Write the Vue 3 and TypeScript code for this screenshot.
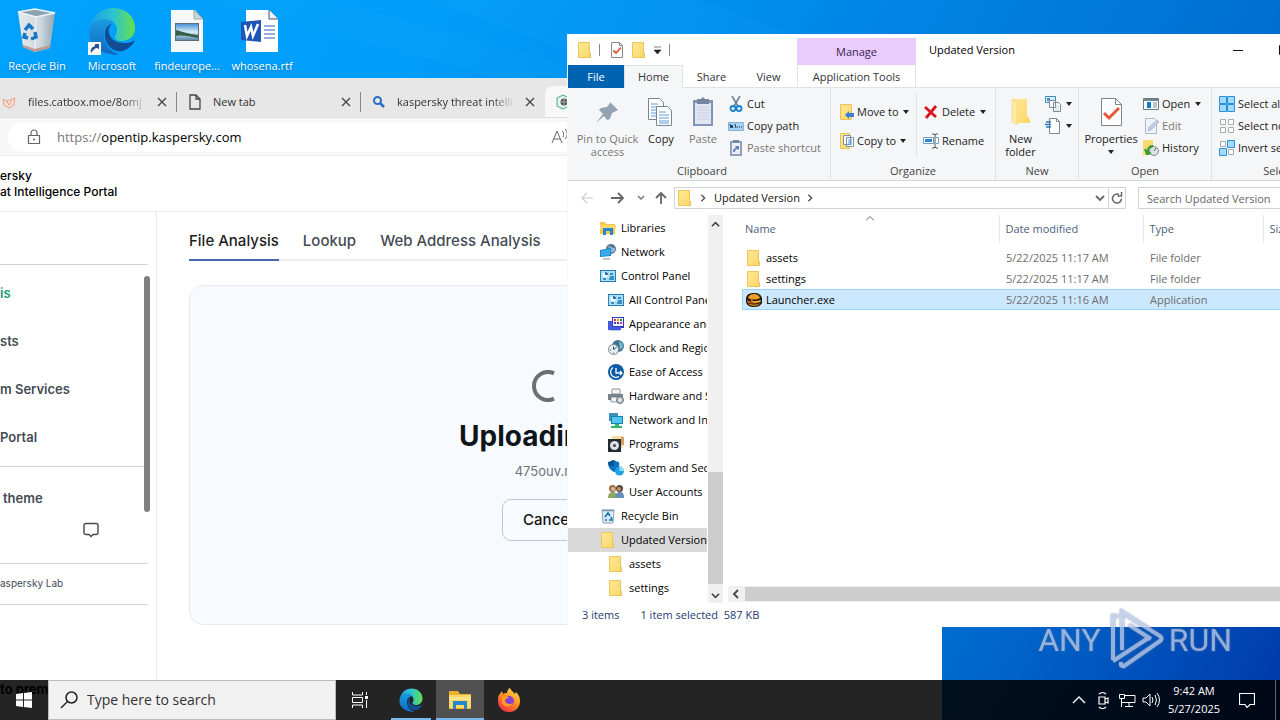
<script setup lang="ts">
interface TreeItem { label: string; icon: string; child?: boolean; active?: boolean }
interface FileRow { name: string; date: string; type: string; icon: string; selected?: boolean }
interface Shortcut { label: string; icon: string }

const shortcuts: Shortcut[] = [
  { label: 'Recycle Bin', icon: 'bin' },
  { label: 'Microsoft Edge', icon: 'edge-link' },
  { label: 'findeurope...', icon: 'image-file' },
  { label: 'whosena.rtf', icon: 'word-file' },
]

const tree: TreeItem[] = [
  { label: 'Libraries', icon: 'libraries' },
  { label: 'Network', icon: 'network' },
  { label: 'Control Panel', icon: 'panel' },
  { label: 'All Control Panel Items', icon: 'panel', child: true },
  { label: 'Appearance and Personalization', icon: 'appearance', child: true },
  { label: 'Clock and Region', icon: 'clock', child: true },
  { label: 'Ease of Access', icon: 'ease', child: true },
  { label: 'Hardware and Sound', icon: 'hardware', child: true },
  { label: 'Network and Internet', icon: 'internet', child: true },
  { label: 'Programs', icon: 'programs', child: true },
  { label: 'System and Security', icon: 'security', child: true },
  { label: 'User Accounts', icon: 'users', child: true },
  { label: 'Recycle Bin', icon: 'bin-small' },
  { label: 'Updated Version', icon: 'folder', active: true },
  { label: 'assets', icon: 'folder', child: true },
  { label: 'settings', icon: 'folder', child: true },
]

const files: FileRow[] = [
  { name: 'assets', date: '5/22/2025 11:17 AM', type: 'File folder', icon: 'folder' },
  { name: 'settings', date: '5/22/2025 11:17 AM', type: 'File folder', icon: 'folder' },
  { name: 'Launcher.exe', date: '5/22/2025 11:16 AM', type: 'Application', icon: 'burger', selected: true },
]
</script>

<template>
  <div class="desktop">
    <svg class="defs" aria-hidden="true">
      <defs>
        <linearGradient id="g-edge-a" x1="0" y1="0" x2="1" y2="0"><stop offset="0" stop-color="#1ba0e2" /><stop offset=".5" stop-color="#2bc3d2" /><stop offset="1" stop-color="#66e04c" /></linearGradient>
        <linearGradient id="g-edge-b" x1="0" y1="0" x2="0" y2="1"><stop offset="0" stop-color="#1b9de2" /><stop offset="1" stop-color="#1266c0" /></linearGradient>
        <linearGradient id="g-folder" x1="0" y1="0" x2="1" y2="1"><stop offset="0" stop-color="#ffe896" /><stop offset="1" stop-color="#fbd768" /></linearGradient>
        <linearGradient id="g-bin" x1="0" y1="0" x2="1" y2="0"><stop offset="0" stop-color="#e4eaee" /><stop offset=".6" stop-color="#cfd9df" /><stop offset="1" stop-color="#8fa6b5" /></linearGradient>
        <linearGradient id="g-fox" x1=".8" y1="0" x2=".2" y2="1"><stop offset="0" stop-color="#ffe14a" /><stop offset=".5" stop-color="#ff8a1f" /><stop offset="1" stop-color="#f2264e" /></linearGradient>
        <linearGradient id="g-photo" x1="0" y1="0" x2="0" y2="1"><stop offset="0" stop-color="#4b93d6" /><stop offset=".5" stop-color="#d8eef8" /><stop offset="1" stop-color="#5c8aa8" /></linearGradient>
      </defs>
      <symbol id="edge" viewBox="0 0 48 48">
        <path d="M2 21C4 9 13 1 25 1c13 0 22 9 22 20 0 8-6 13-13 13-5 0-7-2-7-4 0-2 2-3 2-7 0-6-5-11-13-11C9 12 4 15 2 21z" fill="url(#g-edge-a)" />
        <path d="M1 24c1-8 7-12 15-12 5 0 9 2 11 5-6-1-11 3-11 11 0 9 6 17 15 19-3 1-6 1-8 0C10 46 0 37 1 24z" fill="url(#g-edge-b)" />
        <path d="M17 26c-1 11 7 20 18 18 5-2 9-5 11-9 1-1 0-2-1-1-3 2-6 2-9 2-8 0-14-4-15-10-1-4 1-7 3-9-4 1-7 4-7 9z" fill="#104d92" />
      </symbol>
      <symbol id="edge-link" viewBox="0 0 48 48">
        <use href="#edge" width="48" height="48" />
        <rect x="0" y="35" width="13" height="13" fill="#f6f6f6" />
        <path d="M3 46c-1-4 1-6 4-7v-2h4v5l-2-1c-2 0-4 2-6 5z" fill="#23509a" />
      </symbol>
      <symbol id="bin" viewBox="0 0 48 48">
        <path d="M5 5l17-3 20 4-5 35-15 4-12-5z" fill="url(#g-bin)" />
        <path d="M5 5l17-3 20 4-19 4z" fill="#8ba3b3" stroke="#eef3f5" stroke-width="1.500" />
        <path d="M23 10l-1 35" stroke="#f3f6f7" stroke-width="1" fill="none" />
        <g fill="none" stroke="#1678c8" stroke-width="3.500"><path d="M12 23l4-5 4 4M22 25l1 5-5 2M15 31l-4-1 1-4" /></g>
        <path d="M10 38l12 4 15-4v3l-15 4-12-5z" fill="#c09a8e" />
      </symbol>
      <symbol id="image-file" viewBox="0 0 48 48">
        <path d="M8 3h24l8 9v33H8z" fill="#f7f8f8" /><path d="M31 3v9h9z" fill="#cdd6da" stroke="#9aa" />
        <rect x="12" y="16" width="24" height="18" fill="#5b6d78" /><rect x="13" y="17" width="22" height="16" fill="url(#g-photo)" />
        <path d="M13 23c5 1 9 3 15 4l7 1v3c-9-2-16-3-22-2z" fill="#355f47" />
      </symbol>
      <symbol id="word-file" viewBox="0 0 48 48">
        <path d="M8 3h23l9 9v33H8z" fill="#fff" /><path d="M31 3v9h9" fill="#edf1f8" stroke="#456" />
        <path d="M26 19h11M26 23h11M26 27h11M26 31h11" stroke="#2a5cb6" /><path d="M3 15l20-2v22L3 33z" fill="#1f56b5" />
        <path d="M7 18l2 11 4-9 2 9 5-12" fill="none" stroke="#fff" stroke-width="2.500" />
      </symbol>
      <symbol id="folder" viewBox="0 0 16 16"><path d="M1.500.5h11v11h1v4h-12z" fill="url(#g-folder)" stroke="#edc65a" stroke-width="1" /><path d="M11.500 15.500c1-1 0-3 2-4v4z" fill="#ffe9a0" stroke="#e5ba4b" stroke-width=".7" /></symbol>
      <symbol id="folder-big" viewBox="0 0 32 32"><path d="M7 3h15v17l3 3v4H11z" fill="url(#g-folder)" /><path d="M7 3l5 4v22l-5-3z" fill="#ffeaa6" stroke="#f4d075" stroke-width=".6" /></symbol>
      <symbol id="burger" viewBox="0 0 16 16">
        <path d="M0 7c0-4 3-6 8-6s7 2 8 5v5c-2 3-4 4-8 4s-7-1-8-5z" fill="#24170b" /><path d="M2 6c1-3 3-4 6-4s5 1 6 4c-3 2-9 2-12 0z" fill="#f09a24" /><path d="M1 8c3 2 9 2 13 0v2c-3 2-10 2-13 0z" fill="#d65c17" /><path d="M2 11c4 2 9 2 12 0-1 4-11 4-12 0z" fill="#d78a2a" /><path d="M5 8l3 2 7-1M5 4h1M8 3h1M10 5h1" stroke="#ffdf6b" fill="none" />
      </symbol>
      <symbol id="libraries" viewBox="0 0 16 16"><path d="M0 2h5l1 2h9v10H0z" fill="#f8c549" /><path d="M0 5h16v4H0z" fill="#ffd96b" /><path d="M3 15V8h10v7h-3v-4H6v4z" fill="#2587d1" /></symbol>
      <symbol id="network" viewBox="0 0 16 16"><circle cx="11" cy="5" r="5" fill="#56748c" /><path d="M8 2c3 0 4 2 7 2v3l-4 2z" fill="#8cb6d1" /><path d="M0 6l11-2v8L0 13z" fill="#1889d4" /><path d="M1 7l9-2v6l-9 1z" fill="#38aceb" /><path d="M3 15h7" stroke="#88a" /></symbol>
      <symbol id="panel" viewBox="0 0 16 16"><rect y="2" width="16" height="12" fill="#2680bd" /><rect x="1" y="3" width="14" height="10" fill="#a8def7" /><circle cx="5" cy="7" r="2.500" fill="#fff" /><path d="M5 7V4a3 3 0 0 1 3 3z" fill="#1e69aa" /><path d="M10 6h3M10 9h4M3 11h3M9 11h5" stroke="#1872ae" stroke-width="1.400" /></symbol>
      <symbol id="appearance" viewBox="0 0 16 16"><path d="M4 1h12v11H4z" fill="#303db7" /><path d="M5 2h10v8H5z" fill="#f6f1ff" /><path d="M6 3h2v2H6z" fill="#d34" /><path d="M9 3h2v2H9z" fill="#f90" /><path d="M12 3h2v2h-2z" fill="#292" /><path d="M6 6h2v2H6zM9 6h2v2H9z" fill="#44a" /><path d="M12 6h2v2h-2z" fill="#c3a" /><path d="M0 5h4v6h9v3H0z" fill="#4557e6" /><path d="M2 14h10v1H2z" fill="#bcd" /></symbol>
      <symbol id="clock" viewBox="0 0 16 16"><circle cx="10" cy="6" r="6" fill="#41718c" /><path d="M11 1c3 1 4 3 4 6l-3 3z" fill="#79b6cf" /><circle cx="5.500" cy="9.500" r="5" fill="#e8eff3" stroke="#788994" /><path d="M5.500 6.500v3l3-2M2 10h1M5 13h1" fill="none" stroke="#356" /></symbol>
      <symbol id="ease" viewBox="0 0 16 16"><circle cx="8" cy="8" r="8" fill="#0c5ba4" /><path d="M8 4v5h6M12 7l2 2-2 2M11 12.500a5 5 0 1 1-6-9" fill="none" stroke="#fff" stroke-width="1.300" /></symbol>
      <symbol id="hardware" viewBox="0 0 16 16"><path d="M4 1h8v5H4z" fill="#f5f8fa" stroke="#849099" /><path d="M0 6h15v6H0z" fill="#78858e" /><path d="M3 9h7v5H3z" fill="#f1f4f6" stroke="#68757e" stroke-width=".7" /><circle cx="12" cy="12" r="3.500" fill="#b5bdc3" stroke="#68757e" /><circle cx="12" cy="12" r="1.500" fill="#f8f8f8" /></symbol>
      <symbol id="internet" viewBox="0 0 16 16"><path d="M1 1h9v8H1z" fill="#3d8fbd" /><path d="M3 4h12v8H3z" fill="#1582b5" /><path d="M4 5h10v6H4z" fill="#54c5ef" /><path d="M7 12h4v2h3v2H3v-2h4z" fill="#31b76b" /></symbol>
      <symbol id="programs" viewBox="0 0 16 16"><path d="M4 0h11v12H4z" fill="#f5dfa1" /><path d="M13 1h3v8h-3z" fill="#d9a06a" /><path d="M0 3h13v13H0z" fill="#252a2e" /><circle cx="6.500" cy="9.500" r="4.500" fill="#d8e2e7" /><circle cx="6.500" cy="9.500" r="1.500" fill="#354551" /></symbol>
      <symbol id="security" viewBox="0 0 16 16"><path d="M0 2c3 0 4-2 6-2 2 1 3 2 5 2 1 6-1 9-5 10C2 10 0 7 0 2z" fill="#0675c1" /><path d="M0 2c3 0 4-2 6-2v6H1z" fill="#085195" /><circle cx="11.500" cy="11" r="4.500" fill="#21a0df" /><path d="M11.500 11V6.500A4.500 4.500 0 0 1 16 11z" fill="#8ddcff" /></symbol>
      <symbol id="users" viewBox="0 0 16 16"><circle cx="4.500" cy="4.500" r="3.500" fill="#9b6b48" /><circle cx="5" cy="5" r="2" fill="#e6b78f" /><circle cx="11.500" cy="4.500" r="3.500" fill="#56463c" /><circle cx="11" cy="5" r="2" fill="#c18f6b" /><path d="M0 14c0-4 2-6 5-6s4 2 4 6z" fill="#8ca761" /><path d="M7 14c0-4 2-6 5-6s4 2 4 6z" fill="#6390b3" /></symbol>
      <symbol id="bin-small" viewBox="0 0 16 16"><path d="M2 2h12l-1 13H3z" fill="#dbeaf3" stroke="#8ba7ba" /><path d="M2 2.500h12" stroke="#7897ac" stroke-width="1.500" /><path d="M5 9l3-4 2 3M11 9l1 3H9M7 12H5" fill="none" stroke="#1476bb" stroke-width="1.600" /></symbol>
      <symbol id="doc-check" viewBox="0 0 16 16"><path d="M2.500.5h8l3 3v12h-11z" fill="#fff" stroke="#8a8a8a" /><path d="M10.500.5v3h3" fill="none" stroke="#8a8a8a" /><path d="M4.500 8.500l2.500 2.500 5-5.500" fill="none" stroke="#e0532f" stroke-width="1.800" /></symbol>
      <symbol id="doc-check-big" viewBox="0 0 32 32"><path d="M6.500 2.500h14l6 6v21h-20z" fill="#fff" stroke="#7d858c" /><path d="M20.500 2.500v6h6" fill="none" stroke="#7d858c" /><path d="M9 17l5 5 10-10" fill="none" stroke="#e8573a" stroke-width="3" /></symbol>
      <symbol id="pin" viewBox="0 0 32 32"><path d="M18 6l8 8-2 1-4 2-2 6-3 1-3-4-8 7 7-9-4-4 2-2 6-1 3-4z" fill="#93a3b5" /></symbol>
      <symbol id="copy" viewBox="0 0 32 32"><g fill="#fff" stroke="#778491"><path d="M3.500 2.500h11l4 4v17h-15z" /><path d="M11.500 10.500h11l4 4v15h-15z" /></g><path d="M6 8h7M6 11h5M6 14h5M6 17h5M6 20h5M14 16h7M14 19h10M14 22h10M14 25h10M14 27h10" stroke="#5d98d9" /></symbol>
      <symbol id="paste" viewBox="0 0 32 32"><path d="M6 4h20v26H6z" fill="#8294b5" /><path d="M8 7h16v21H8z" fill="#dfe6f2" /><path d="M10 3h4l2-2 2 2h4v5H10z" fill="#74849e" /><path d="M10 11h12M10 14h12M10 17h12M10 20h12M10 23h12" stroke="#c5d0e1" /></symbol>
      <symbol id="cut" viewBox="0 0 16 16"><path d="M4 0l6 10M12 0L6 10" stroke="#728292" stroke-width="1.600" /><g fill="none" stroke="#1683cf" stroke-width="1.800"><circle cx="5" cy="12.500" r="2.500" /><circle cx="11" cy="12.500" r="2.500" /></g></symbol>
      <symbol id="path" viewBox="0 0 16 16"><path d="M.5 4.500h15v8H.5z" fill="#a7d3f3" stroke="#80b3d9" /><path d="M2 6l1 4 1-3 1 3M7 6l1 4M9 9h1M11 9h1M13 9h1" fill="none" stroke="#17374f" /></symbol>
      <symbol id="shortcut" viewBox="0 0 16 16"><path d="M2 1h12v15H2z" fill="#91a1bc" /><path d="M4 3h8v11H4z" fill="#edf1f7" /><path d="M5 0h6v3H5z" fill="#77869f" /><path d="M5 12c0-3 1-4 3-4L7 6h4v4L9 9c-2 1-2 2-2 3z" fill="#6681ae" /></symbol>
      <symbol id="move" viewBox="0 0 16 16"><path d="M1.500.5h11v15h-11z" fill="url(#g-folder)" stroke="#e9c45a" /><path d="M6 11l4-4v2h5v4h-5v2z" fill="#3f7fd5" /></symbol>
      <symbol id="copy-to" viewBox="0 0 16 16"><path d="M1.500.5h9v15h-9z" fill="url(#g-folder)" stroke="#e9c45a" /><path d="M4.500 2.500h7v9h-7zM7.500 4.500h7v9h-7z" fill="#fff" stroke="#7d91aa" /><path d="M9 7h4M9 9h4M9 11h4" stroke="#5b9add" /></symbol>
      <symbol id="delete" viewBox="0 0 16 16"><path d="M2 3l11 10M13 2L3 14" stroke="#d9151e" stroke-width="2.800" /></symbol>
      <symbol id="rename" viewBox="0 0 16 16"><path d="M.5 4.500h10v6H.5zM13 4.500h2.500v6H13" fill="#fff" stroke="#6c9fca" /><path d="M2 6h7v3H2z" fill="#2d86ce" /><path d="M9 1h2l1 1 1-1h2M9 15h2l1-1 1 1h2M12 2v12" fill="none" stroke="#565656" /></symbol>
      <symbol id="new-item" viewBox="0 0 16 16"><path d="M.5.5h10v6H.5z" fill="#d8eefe" stroke="#4289b6" /><path d="M2 2h3v3H2z" fill="#4a96c5" /><path d="M4.500 4.500h6v7h-6zM8.500 6.500h5l2 2v7h-7z" fill="#fff" stroke="#778a98" /><path d="M10 10h4M10 12h4M10 14h4" stroke="#9eb4c2" stroke-width=".6" /></symbol>
      <symbol id="easy" viewBox="0 0 16 16"><path d="M4.500.5h7l3 3v12h-10z" fill="#fff" stroke="#778a98" /><path d="M11.500.5v3h3" fill="none" stroke="#778a98" /><path d="M1 4h5M0 6.500h6M1 9h5" stroke="#2e78b8" stroke-width="1.300" /></symbol>
      <symbol id="open" viewBox="0 0 16 16"><path d="M.5 2.500h15v11H.5z" fill="#fff" stroke="#687986" /><path d="M1 3h14v2H1z" fill="#728593" /><path d="M4 6h4v6H4z" fill="#127bc7" /><path d="M10 7h4M10 9h4M10 11h4" stroke="#7d8992" /></symbol>
      <symbol id="edit" viewBox="0 0 16 16"><path d="M2.500.5h9l2 2v13h-11z" fill="#f0f4fc" stroke="#aab8cf" /><path d="M5 13l1-4 8-7 2 2-8 8z" fill="#c3cfe1" stroke="#9aaac3" stroke-width=".6" /></symbol>
      <symbol id="history" viewBox="0 0 16 16"><path d="M0 0h10v15H0z" fill="#fbd96a" /><circle cx="11" cy="11" r="4.500" fill="#dce4e6" stroke="#7f8c91" /><path d="M11 11l2-3" fill="none" stroke="#667" /><path d="M5 13c-1-4 1-7 5-7M2 9l2 5 4-1" fill="none" stroke="#279c36" stroke-width="2" /></symbol>
      <symbol id="sel-all" viewBox="0 0 16 16"><path d="M.5.5h7v7h-7zM8.500.5h7v7h-7zM.5 8.500h7v7h-7zM8.500 8.500h7v7h-7z" fill="#a3d8ff" stroke="#2990db" /></symbol>
      <symbol id="sel-none" viewBox="0 0 16 16"><path d="M1.500 1.500h5v5h-5zM9.500 1.500h5v5h-5zM1.500 9.500h5v5h-5zM9.500 9.500h5v5h-5z" fill="#fff" stroke="#aaa" /></symbol>
      <symbol id="sel-inv" viewBox="0 0 16 16"><path d="M1.500 1.500h5v5h-5zM9.500 9.500h5v5h-5z" fill="#fff" stroke="#aaa" /><path d="M8.500.5h7v7h-7zM.5 8.500h7v7h-7z" fill="#a3d8ff" stroke="#2990db" /></symbol>
      <symbol id="close" viewBox="0 0 10 10"><path d="M1 1l8 8M9 1L1 9" stroke="#444" stroke-width="1.300" /></symbol>
      <symbol id="lens" viewBox="0 0 20 20"><circle cx="12.500" cy="7.500" r="5.500" fill="none" stroke="currentColor" stroke-width="1.500" /><path d="M8.500 11.500L2 18" stroke="currentColor" stroke-width="1.500" /></symbol>
      <symbol id="chev" viewBox="0 0 10 10"><path d="M1 3l4 4 4-4" fill="none" stroke="currentColor" stroke-width="1.800" /></symbol>
    </svg>

    <svg class="rays" viewBox="0 0 1280 720" preserveAspectRatio="none" aria-hidden="true">
      <path d="M200 0L700 130V100L330 0z" fill="#2fb4ff" opacity=".07" /><path d="M430 0L860 160V60L700 0z" fill="#2fb4ff" opacity=".09" />
    </svg>

    <ul class="shortcuts">
      <li v-for="s in shortcuts" :key="s.label"><svg><use :href="'#' + s.icon" /></svg><span>{{ s.label }}</span></li>
    </ul>

    <section class="browser">
      <div class="strip">
        <div class="tab first"><svg class="fav"><path d="M2 5l4 2 8-3-1 7-5 3-5-3zM5 6l3 5 3-5" fill="#f8dfcf" stroke="#e7a184" /></svg><span class="tt fade">files.catbox.moe/8omj</span><button aria-label="Close tab"><svg><use href="#close" /></svg></button></div>
        <div class="tab"><svg class="fav"><path d="M3 1h6l4 4v10H3zM9 1v4h4" fill="none" stroke="#444" stroke-width="1.300" /></svg><span class="tt">New tab</span><button aria-label="Close tab"><svg><use href="#close" /></svg></button></div>
        <div class="tab"><svg class="fav"><circle cx="6.500" cy="6.500" r="3.500" fill="none" stroke="#2b6cc4" stroke-width="2" /><path d="M9 9l4 4" stroke="#2b6cc4" stroke-width="2.500" /></svg><span class="tt fade">kaspersky threat intellig</span><button aria-label="Close tab"><svg><use href="#close" /></svg></button></div>
        <div class="tab current"><svg class="fav"><path d="M8 1l6 3v8l-6 3-6-3V4z" fill="#e3f3ee" stroke="#3ba98a" /><circle cx="9" cy="8" r="3.500" fill="#555" /><path d="M5 8h8M9 4v8" stroke="#aaa" /></svg></div>
      </div>
      <div class="toolbar">
        <div class="omnibox">
          <svg class="lock"><path d="M2.500 6.500h11v8h-11zM5 6V4a3 3 0 0 1 6 0v2" fill="none" stroke="#666" stroke-width="1.200" /><circle cx="8" cy="10.500" r="1" fill="#555" /></svg>
          <label for="url">https://</label><input id="url" type="text" value="opentip.kaspersky.com" />
          <svg class="read"><path d="M1 15L6 3l5 12M3 11h6M11 3c2 1 2 4 1 6M14 1c3 3 3 7 0 10" fill="none" stroke="#666" /></svg>
        </div>
      </div>
      <div class="page">
        <header class="brand"><span>ersky</span><span>at Intelligence Portal</span></header>
        <aside>
          <nav class="side-nav">
            <a href="#" class="on">is</a><a href="#">sts</a><a href="#">m Services</a><a href="#">Portal</a>
            <i class="side-scroll"></i>
          </nav>
          <div class="theme"><a href="#">theme</a><svg><path d="M3 1.500h10q2 0 2 2v7q0 2-2 2h-3l-2 2-2-2H3q-2 0-2-2v-7q0-2 2-2z" fill="none" stroke="#434a52" stroke-width="1.400" /></svg></div>
          <div class="legal">aspersky Lab</div>
          <div class="premium">to premium</div>
        </aside>
        <main>
          <nav class="ktabs"><a href="#" class="on">File Analysis</a><a href="#">Lookup</a><a href="#">Web Address Analysis</a></nav>
          <div class="card">
            <svg class="spin" viewBox="0 0 32 32"><path d="M22 3.350A14 14 0 1 0 22 28.650" fill="none" stroke="#6d6f72" stroke-width="4" /></svg>
            <h1>Uploading...</h1><p>475ouv.rar</p><button>Cancel</button>
          </div>
        </main>
      </div>
    </section>

    <section class="explorer">
      <div class="titlebar">
        <div class="qat"><svg class="ic"><use href="#folder" /></svg><i></i><svg class="ic"><use href="#doc-check" /></svg><svg class="ic"><use href="#folder" /></svg><svg class="dd"><path d="M0 1h7M0 4h7L3.500 8z" fill="#222" stroke="#222" stroke-width=".6" /></svg><i></i></div>
        <div class="manage">Manage</div>
        <div class="caption">Updated Version</div>
        <div class="controls"><button aria-label="Minimize"><svg><path d="M0 5.500h10" stroke="#111" /></svg></button><button aria-label="Maximize"><svg><path d="M.5.500h9v9h-9z" fill="none" stroke="#111" /></svg></button><button aria-label="Close"><svg><use href="#close" /></svg></button></div>
      </div>
      <div class="rtabs"><button class="file">File</button><button class="home">Home</button><button>Share</button><button>View</button><button class="app">Application Tools</button></div>
      <div class="ribbon">
        <div class="group clip">
          <div class="gbody">
            <button class="big pin off"><svg><use href="#pin" /></svg>Pin to Quick access</button>
            <button class="big cp"><svg><use href="#copy" /></svg>Copy</button>
            <button class="big ps off"><svg><use href="#paste" /></svg>Paste</button>
            <div class="list"><button><svg class="ic"><use href="#cut" /></svg>Cut</button><button><svg class="ic"><use href="#path" /></svg>Copy path</button><button class="off"><svg class="ic"><use href="#shortcut" /></svg>Paste shortcut</button></div>
          </div><div class="glabel">Clipboard</div>
        </div>
        <div class="group org">
          <div class="gbody"><div class="list tall l1"><button><svg class="ic"><use href="#move" /></svg>Move to<b class="arr"></b></button><button><svg class="ic"><use href="#copy-to" /></svg>Copy to<b class="arr"></b></button></div>
            <div class="list tall l2"><button><svg class="ic"><use href="#delete" /></svg>Delete<b class="arr"></b></button><button><svg class="ic"><use href="#rename" /></svg>Rename</button></div></div>
          <div class="glabel">Organize</div>
        </div>
        <div class="group new">
          <div class="gbody"><button class="big nf"><svg><use href="#folder-big" /></svg>New folder</button>
            <div class="list"><button aria-label="New item"><svg class="ic"><use href="#new-item" /></svg><b class="arr"></b></button><button aria-label="Easy access"><svg class="ic"><use href="#easy" /></svg><b class="arr"></b></button></div></div>
          <div class="glabel">New</div>
        </div>
        <div class="group opn">
          <div class="gbody"><button class="big pr"><svg><use href="#doc-check-big" /></svg>Properties<b class="arr"></b></button>
            <div class="list"><button><svg class="ic"><use href="#open" /></svg>Open<b class="arr"></b></button><button class="off"><svg class="ic"><use href="#edit" /></svg>Edit</button><button><svg class="ic"><use href="#history" /></svg>History</button></div></div>
          <div class="glabel">Open</div>
        </div>
        <div class="group sel">
          <div class="gbody"><div class="list"><button><svg class="ic"><use href="#sel-all" /></svg>Select all</button><button><svg class="ic"><use href="#sel-none" /></svg>Select none</button><button><svg class="ic"><use href="#sel-inv" /></svg>Invert selection</button></div></div>
          <div class="glabel">Select</div>
        </div>
      </div>
      <div class="address">
        <svg class="hist" viewBox="0 0 92 16"><g fill="none" stroke-width="1.800"><path d="M13 8H2M7 3L2 8l5 5" stroke="#ccc" stroke-width="1.200" /><path d="M31 8h12M38 3l5 5-5 5" stroke="#666" /><path d="M58 6l3 3 3-3" stroke="#777" stroke-width="1.500" /><path d="M81 14V3M76 8l5-5 5 5" stroke="#666" /></g></svg>
        <div class="crumbs"><svg class="ic"><use href="#folder" /></svg><svg class="cr"><use href="#chev" /></svg><button>Updated Version</button><svg class="cr"><use href="#chev" /></svg><svg class="drop"><use href="#chev" /></svg><button class="refresh" aria-label="Refresh"><svg viewBox="0 0 12 12"><path d="M10.500 6.500A4.500 4.500 0 1 1 8 2.500M10.500 0v4h-4" fill="none" stroke="#666" stroke-width="1.500" /></svg></button></div>
        <input class="find" type="text" placeholder="Search Updated Version" aria-label="Search Updated Version" />
      </div>
      <div class="body">
        <ul class="tree"><li v-for="(t, i) in tree" :key="i" :class="{ child: t.child, active: t.active }"><svg class="ic"><use :href="'#' + t.icon" /></svg>{{ t.label }}</li></ul>
        <div class="vbar"><svg class="up"><use href="#chev" /></svg><i></i><svg><use href="#chev" /></svg></div>
        <div class="pane">
          <table>
            <thead><tr><th class="c1">Name<svg class="sort"><path d="M0 4.500l4-4 4 4" fill="none" stroke="#666" /></svg></th><th class="c2">Date modified</th><th class="c3">Type</th><th>Size</th></tr></thead>
            <tbody><tr v-for="f in files" :key="f.name" :class="{ selected: f.selected }"><td><span class="fname"><svg class="ic"><use :href="'#' + f.icon" /></svg>{{ f.name }}</span></td><td>{{ f.date }}</td><td>{{ f.type }}</td><td></td></tr></tbody>
          </table>
          <div class="hbar"><svg><use href="#chev" /></svg><i></i></div>
        </div>
      </div>
      <div class="status"><span>3 items</span><span>1 item selected&nbsp; 587 KB</span></div>
    </section>

    <div class="mark" aria-label="ANY RUN"><span>ANY</span>
      <svg viewBox="0 0 56 64"><g fill="none" stroke="currentColor" stroke-width="4"><path d="M9 8H4v44M13 42V4l38 24q3 3 0 5L15 58q-1 1-3-1v-3" /><path d="M4 53l37-24M20 17l22 14" /></g></svg><span>RUN</span></div>

    <footer class="taskbar">
      <button class="start" aria-label="Start"><svg viewBox="0 0 16 16"><path d="M0 2l7-1v6.500H0zM8 1l8-1v7.500H8zM0 8.500h7V15l-7-1zM8 8.500h8V16l-8-1z" fill="#fff" /></svg></button>
      <div class="search"><svg><use href="#lens" /></svg><input type="text" placeholder="Type here to search" aria-label="Type here to search" /></div>
      <button class="task view" aria-label="Task View"><svg class="tv"><path d="M1.500 1v3h10V1M1.500 17v-3h10v3M1.500 6.500h10v5h-10zM15.500 1v3M15.500 9v8" fill="none" stroke="#fff" /><path d="M14 5h3v3h-3z" fill="#fff" /></svg></button>
      <button class="task running" aria-label="Edge"><svg class="app-ic"><use href="#edge" /></svg></button>
      <button class="task focused" aria-label="File Explorer"><svg class="app-ic" viewBox="0 0 24 24"><path d="M1 3h9l2 3h11v15H1z" fill="#efb22f" /><path d="M1 7h22v13H1z" fill="#ffd868" /><path d="M5 21v-8h14v8h-3v-4H8v4z" fill="#2389ce" /><path d="M1 9h22v3H1z" fill="#ffe38c" /></svg></button>
      <button class="task" aria-label="Firefox"><svg class="app-ic" viewBox="0 0 24 24"><path d="M2 7l3-4 1 3c1-1 3-1 4-1 0-2 1-4 3-5 1 3 4 4 5 6l1-2c3 3 4 6 4 9 0 6-4 11-11 11S1 19 1 13c0-3 0-4 1-6z" fill="url(#g-fox)" /><circle cx="12" cy="13" r="5" fill="#8441d8" /><path d="M5 9c3-2 6-1 7 1-2 0-4 1-4 3 1 3 5 4 8 2-1 4-9 5-11 0z" fill="#ff9b26" /></svg></button>
      <div class="tray">
        <svg viewBox="0 0 90 18"><g fill="none" stroke="#fff"><path d="M1 12l6-6 6 6" stroke-width="1.400" /><path d="M27 6h6v7h-6zM33 8l3-1v5l-3-1M27 3c2-2 5-2 7 0M27 16c2 2 5 2 7 0" stroke-width="1.200" /><path d="M53 4.500h10v7H50M57 12v3M53 15.500h8M47.500 3.500h5v4h-5zM49.500 7v9" /><path d="M71 7h3l4-4v12l-4-4h-3zM80 6q2 3 0 6M83 4q3 5 0 10M85 2q5 7 0 14" /></g></svg>
        <div class="time"><span>9:42 AM</span><span>5/27/2025</span></div>
        <svg class="note" viewBox="0 0 16 16"><path d="M.5 1.500h15v11H11l-3 3-2-3H.5z" fill="none" stroke="#fff" stroke-width="1.200" /></svg><i></i>
      </div>
    </footer>
  </div>
</template>

<style>
html, body, #app { height: 100%; }
body { margin: 0; overflow: hidden; }
</style>

<style scoped>
.desktop { position: relative; height: 100vh; overflow: hidden; font: 11px/16px "Open Sans", "Noto Sans", sans-serif; color: #111; background: linear-gradient(120deg, #00a2fd 0%, #009efa 25%, #0090f0 41%, #0070d2 75%, #0066cc 81%, #0038a8 100%); }
.desktop *, .desktop *::before { box-sizing: border-box; }
.defs { position: absolute; width: 0; height: 0; }
.rays { position: absolute; inset: 0; width: 100%; height: 100%; }
button { font: inherit; color: inherit; background: none; border: 0; padding: 0; }
input { font: inherit; color: inherit; border: 0; background: none; padding: 0; min-width: 0; }
a { color: inherit; text-decoration: none; }
ul { list-style: none; margin: 0; padding: 0; }
svg { display: block; flex: none; }
.ic { width: 16px; height: 16px; }

.shortcuts { position: relative; display: flex; gap: 1px; }
.shortcuts li { width: 74px; padding-top: 7px; display: flex; flex-direction: column; align-items: center; color: #fff; text-align: center; text-shadow: 0 1px 2px #0468; }
.shortcuts svg { width: 48px; height: 48px; margin-bottom: 3px; }
.shortcuts span { width: 68px; }

.browser { position: absolute; left: 0; top: 78px; bottom: 0; width: 942px; background: #fff; display: flex; flex-direction: column; }
.strip { height: 40px; background: #e7e7e7; display: flex; align-items: stretch; padding-top: 8px; border-bottom: 1px solid #ddd; }
.tab { width: 184px; display: flex; align-items: center; padding: 0 10px; color: #333; position: relative; }
.tab + .tab::before { content: ""; position: absolute; left: -1px; top: 6px; width: 1px; height: 20px; background: #888; }
.tab.first { width: 177px; padding-left: 1px; }
.tab .fav { width: 16px; height: 16px; margin-right: 11px; }
.tab + .tab .fav { margin-right: 10px; }
.tab .tt { flex: 1; white-space: nowrap; overflow: hidden; }
.tab .fade { mask-image: linear-gradient(90deg, #000 80%, transparent); }
.tab button { margin-left: 10px; } .tab button svg { width: 10px; height: 10px; }
.tab.current { background: #f8f8f8; border-radius: 8px 8px 0 0; flex: 1; }
.tab.current::before { display: none; }
.toolbar { height: 38px; background: #f7f7f7; padding: 4px 8px; border-bottom: 1px solid #eee; }
.omnibox { height: 30px; border-radius: 15px; background: #fff; display: flex; align-items: center; padding-left: 18px; font-size: 13px; }
.lock { width: 16px; height: 16px; margin-right: 15px; }
.omnibox label { color: #777; } .omnibox input { width: 450px; color: #000; }
.read { width: 20px; height: 18px; }

.page { flex: 1; display: grid; grid-template: 56px 1fr / 157px 1fr; font-family: Inter, "Open Sans", sans-serif; }
.brand { grid-column: 1 / 3; border-bottom: 1px solid #ececec; display: flex; flex-direction: column; padding-top: 12px; font-size: 12px; font-weight: 500; color: #000; }
aside { border-right: 1px solid #e8eaec; padding-right: 8px; color: #444b54; font-size: 13px; font-weight: 600; }
.side-nav { position: relative; margin-top: 52px; border-top: 1px solid #d2d2d2; border-bottom: 1px solid #d2d2d2; padding-top: 4px; height: 203px; }
.side-nav a { display: block; height: 48px; line-height: 48px; white-space: nowrap; }
.side-nav .on { color: #1b9a7c; }
.side-scroll { position: absolute; right: -2px; top: 11px; width: 6px; height: 236px; border-radius: 3px; background: #808080; z-index: 1; }
.theme { height: 97px; border-bottom: 1px solid #d2d2d2; padding: 23px 0 0 3px; }
.theme svg { width: 16px; height: 16px; margin: 16px 0 0 80px; }
.legal { height: 41px; line-height: 38px; border-bottom: 1px solid #d2d2d2; font-size: 10px; font-weight: 400; }
.premium { padding-top: 76px; font-weight: 700; color: #000; white-space: nowrap; overflow: hidden; width: 48px; }
main { padding: 12px 35px 0 32px; }
.ktabs { display: flex; gap: 24px; border-bottom: 2px solid #eee; font-size: 15px; color: #444b54; font-weight: 500; }
.ktabs a { height: 37px; line-height: 33px; margin-bottom: -2px; white-space: nowrap; }
.ktabs .on { color: #1d1d24; border-bottom: 2px solid #4566b4; }
.card { margin-top: 24px; height: 340px; border: 1px solid #e6ebef; border-radius: 14px; background: #f7fbff; display: flex; flex-direction: column; align-items: center; padding-top: 84px; }
.spin { width: 32px; height: 32px; }
h1 { margin: 16px 0 0; padding-right: 10px; font-size: 28px; line-height: 36px; font-weight: 700; color: #10151c; }
.card p { margin: 7px 0 0; font-size: 13px; line-height: 20px; color: #6f7377; }
.card button { margin-top: 18px; width: 92px; height: 42px; border: 1px solid #c3c7cb; border-radius: 9px; font-size: 15px; font-weight: 500; color: #111; }

.explorer { position: absolute; left: 567px; top: 34px; width: 786px; height: 593px; background: #fff; border-left: 1px solid #eefaff; display: flex; flex-direction: column; }
.titlebar { height: 31px; display: flex; }
.qat { width: 229px; display: flex; align-items: center; padding-left: 9px; }
.qat i { width: 1px; height: 12px; background: #888; margin: 0 9px 0 6px; }
.qat .ic { margin-right: 7px; } .qat i + .ic { margin-right: 6px; } .qat .ic:first-child { margin-right: 0; }
.qat .dd { width: 7px; height: 8px; margin-right: 2px; }
.manage { width: 119px; margin-top: 4px; background: #e9ccfb; line-height: 28px; text-align: center; color: #39245a; }
.caption { padding-left: 13px; line-height: 32px; color: #000; }
.controls { margin-left: auto; display: flex; } .controls button { width: 46px; display: grid; place-items: center; } .controls svg { width: 10px; height: 10px; }
.rtabs { height: 23px; display: flex; color: #333; border-bottom: 1px solid #e0e2e4; background: #fff; }
.rtabs button { width: 57px; height: 23px; }
.rtabs .file { width: 56px; background: #0063b1; color: #fff; }
.rtabs .home { width: 59px; background: #f5f6f7; border: 1px solid #dfe1e3; border-bottom: 0; }
.rtabs .app { width: 119px; border: solid #e3e3e3; border-width: 0 1px; white-space: nowrap; }
.ribbon { height: 93px; background: #f5f6f7; border-bottom: 1px solid #d3d5d7; display: flex; color: #222; }
.group { border-right: 1px solid #dfe1e3; display: flex; flex-direction: column; padding-top: 5px; flex: none; }
.gbody { display: flex; height: 70px; }
.glabel { text-align: center; color: #444; }
.off { color: #777; }
.clip { width: 263px; padding-left: 6px; } .org { width: 165px; } .new { width: 83px; } .opn { width: 133px; } .sel { width: 126px; padding-left: 7px; border: 0; }
.big { display: flex; flex-direction: column; align-items: center; padding-top: 3px; line-height: 13px; text-align: center; }
.big svg { width: 32px; height: 32px; margin-bottom: 4px; }
.big.pin { width: 67px; } .big.cp { width: 40px; } .big.ps { width: 44px; } .big.nf { width: 49px; } .big.pr { width: 64px; }
.big .arr { margin: 5px 0 0; }
.list { display: flex; flex-direction: column; }
.list button { height: 22px; display: flex; align-items: center; gap: 3px; white-space: nowrap; }
.clip .list { padding-left: 3px; }
.tall { padding-top: 4px; } .tall button { height: 29px; }
.org .l1 { width: 86px; padding-left: 8px; border-right: 1px solid #dfe1e3; height: 64px; } .l1 button { gap: 2px; } .org .l2 { padding-left: 6px; }
.arr { border: solid transparent; border-width: 4px 3px 0; border-top-color: #222; margin-left: 2px; }
.address { height: 34px; display: flex; align-items: center; }
.hist { width: 92px; height: 16px; margin-left: 12px; }
.crumbs { margin-left: 2px; width: 452px; height: 22px; border: 1px solid #d4d4d4; display: flex; align-items: center; padding-left: 2px; color: #111; }
.cr { width: 8px; height: 8px; transform: rotate(-90deg); margin: 0 7px 0 6px; color: #555; }
.drop { width: 10px; height: 10px; margin: 0 3px 0 auto; color: #666; }
.refresh { border-left: 1px solid #d4d4d4; height: 20px; width: 17px; display: grid; place-items: center; } .refresh svg { width: 12px; height: 12px; }
.find { margin-left: 12px; width: 207px; height: 22px; border: 1px solid #d4d4d4; padding-left: 8px; color: #555; }
.find::placeholder { color: #666; opacity: 1; }
.body { flex: 1; min-height: 0; display: flex; }
.tree { width: 139px; overflow: hidden; padding-top: 1px; margin-right: 1px; color: #000; }
.tree li { height: 24px; display: flex; align-items: center; gap: 5px; padding-left: 32px; white-space: nowrap; }
.tree .child { padding-left: 40px; } .tree .active { background: #d9d9d9; }
.vbar { width: 15px; background: #f0f0f0; display: flex; flex-direction: column; align-items: center; color: #444; padding: 5px 0 3px; }
.vbar svg { width: 9px; height: 9px; } .vbar .up { transform: rotate(180deg); }
.vbar i { margin-top: auto; margin-bottom: 7px; width: 15px; height: 112px; background: #cdcdcd; }
.pane { flex: 1; display: flex; flex-direction: column; min-width: 0; padding-left: 5px; }
table { border-collapse: collapse; table-layout: fixed; width: 611px; margin-left: 14px; }
th { height: 28px; padding: 0 0 0 6px; font-weight: 400; text-align: left; color: #4c607a; border-left: 1px solid #e5e5e5; position: relative; }
th.c1 { width: 257px; border: 0; padding-left: 3px; } th.c2 { width: 144px; } th.c3 { width: 120px; }
.sort { position: absolute; left: 124px; top: 1px; width: 8px; height: 5px; }
thead::after { content: ""; display: block; height: 4px; }
td { height: 21px; padding: 0 0 0 7px; color: #6d6d6d; } td:first-child { padding-left: 4px; color: #000; }
.fname { display: flex; align-items: center; gap: 4px; }
.selected { background: #cce8ff; outline: 1px solid #99d1ff; outline-offset: -1px; }
.hbar { margin-top: auto; height: 16px; display: flex; align-items: center; background: #f0f0f0; color: #444; margin-bottom: 1px; }
.hbar svg { width: 10px; height: 10px; margin: 0 4px 0 3px; transform: rotate(90deg); } .hbar i { flex: 1; height: 14px; background: #cdcdcd; }
.status { height: 24px; display: flex; align-items: center; gap: 21px; padding-left: 14px; color: #1e3a70; }

.mark { position: absolute; right: 48px; bottom: 48px; display: flex; align-items: center; color: #b8c8e8; opacity: .8; font: 400 32px/36px Roboto, sans-serif; filter: drop-shadow(0 0 1px #678); }
.mark svg { width: 56px; height: 64px; margin: 0 4px 0 8px; }

.taskbar { position: absolute; left: 0; right: 0; bottom: 0; height: 40px; display: flex; background: rgba(0, 0, 0, .86); color: #fff; }
.start { width: 48px; display: grid; place-items: center; } .start svg { width: 16px; height: 16px; }
.search { width: 288px; background: #f1f1f1; border: 1px solid #bbb; display: flex; align-items: center; padding-left: 10px; color: #222; }
.search svg { width: 20px; height: 20px; margin-right: 8px; } .search input { flex: 1; font-size: 14px; line-height: 20px; } .search input::placeholder { color: #333; opacity: 1; }
.task { width: 48px; margin-right: 1px; display: grid; place-items: center; position: relative; }
.task.view { margin-right: 3px; }
.tv { width: 18px; height: 18px; } .app-ic { width: 24px; height: 24px; }
.running::after, .focused::after { content: ""; position: absolute; bottom: 0; left: 4px; right: 4px; height: 2px; background: #76b9ed; }
.focused { background: #505050; } .focused::after { left: 0; right: 0; }
.tray { margin-left: auto; display: flex; align-items: center; } .tray svg { width: 90px; height: 18px; }
.time { display: flex; flex-direction: column; text-align: center; line-height: 18px; width: 64px; margin: 0 13px 0 0; }
.tray .note { width: 16px; height: 16px; } .tray i { width: 1px; height: 40px; background: #666; margin: 0 4px 0 20px; }
</style>
